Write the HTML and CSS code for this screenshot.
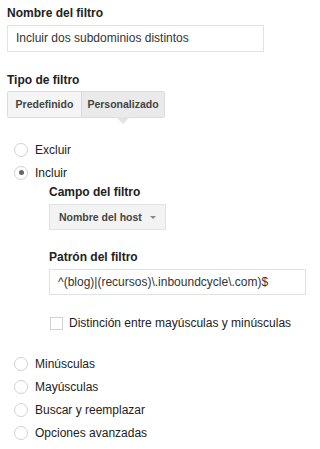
FILE: index.html
```html
<!DOCTYPE html>
<html lang="es">
<head>
  <meta charset="UTF-8">
  <title>Filtro</title>
  <link rel="stylesheet" href="styles.css">
</head>
<body>
  <div class="form">
    <div class="label">Nombre del filtro</div>
    <div class="textbox name-box">Incluir dos subdominios distintos</div>

    <div class="label type-label">Tipo de filtro</div>
    <div class="tabs">
      <div class="tab">Predefinido</div>
      <div class="tab active">Personalizado</div>
    </div>

    <div class="options">
      <div class="option"><span class="radio"></span>Excluir</div>
      <div class="option"><span class="radio checked"></span>Incluir</div>
      <div class="sub">
        <div class="label">Campo del filtro</div>
        <div class="select">Nombre del host <span class="caret"></span></div>
        <div class="label pattern-label">Patrón del filtro</div>
        <div class="textbox pattern-box">^(blog)|(recursos)\.inboundcycle\.com)$</div>
        <div class="check-row"><span class="checkbox"></span>Distinción entre mayúsculas y minúsculas</div>
      </div>
      <div class="option lower"><span class="radio"></span>Minúsculas</div>
      <div class="option"><span class="radio"></span>Mayúsculas</div>
      <div class="option"><span class="radio"></span>Buscar y reemplazar</div>
      <div class="option"><span class="radio"></span>Opciones avanzadas</div>
    </div>
  </div>
</body>
</html>
```

FILE: styles.css
```css
body {
  margin: 0;
  background: #fff;
  font-family: 'Liberation Sans', Arial, sans-serif;
  font-size: 12px;
  color: #222;
}
.form { padding: 5px 7px 0; }
.label {
  font-weight: bold;
  line-height: 16px;
  margin-bottom: 4px;
}
.textbox {
  box-sizing: border-box;
  height: 27px;
  line-height: 25px;
  border: 1px solid #e2e2e2;
  padding: 0 8px;
  color: #333;
}
.name-box { width: 257px; }
.type-label { margin-top: 20px; margin-bottom: 3px; }
.tabs {
  display: inline-flex;
  height: 27px;
  box-sizing: border-box;
  border: 1px solid #dcdcdc;
  border-radius: 2px;
}
.tab {
  box-sizing: border-box;
  width: 73px;
  text-align: center;
  line-height: 25px;
  font-size: 10.5px;
  font-weight: bold;
  color: #444;
  background: #f5f5f5;
}
.tab.active {
  width: 83px;
  background: #eaeaea;
  border-left: 1px solid #d8d8d8;
  position: relative;
}
.tab.active::after {
  content: "";
  position: absolute;
  left: 50%;
  bottom: -7px;
  margin-left: -7px;
  border-left: 7px solid transparent;
  border-right: 7px solid transparent;
  border-top: 7px solid #e3e3e3;
}
.options { margin-top: 20px; padding-left: 7px; }
.option {
  display: flex;
  align-items: center;
  height: 23px;
}
.radio {
  box-sizing: border-box;
  width: 14px;
  height: 14px;
  border: 1px solid #d2d2d2;
  border-radius: 50%;
  margin-right: 7px;
  position: relative;
  background: #fff;
}
.radio.checked::after {
  content: "";
  position: absolute;
  left: 3.5px;
  top: 3.5px;
  width: 5px;
  height: 5px;
  border-radius: 50%;
  background: #666;
}
.sub { padding-left: 35px; }
.select {
  display: inline-flex;
  align-items: center;
  box-sizing: border-box;
  width: 117px;
  height: 26px;
  padding: 0 9px;
  border: 1px solid #e2e2e2;
  background: #f3f3f3;
  font-size: 10.5px;
  font-weight: bold;
  color: #444;
}
.caret {
  margin-left: auto;
  border-left: 3px solid transparent;
  border-right: 3px solid transparent;
  border-top: 3px solid #888;
}
.pattern-label { margin-top: 19px; }
.pattern-box { width: 257px; height: 26px; line-height: 24px; }
.check-row {
  display: flex;
  align-items: center;
  margin-top: 20px;
  height: 16px;
}
.checkbox {
  box-sizing: border-box;
  width: 13px;
  height: 13px;
  border: 1px solid #d2d2d2;
  margin: 0 6px 0 1px;
}
.lower { margin-top: 21px; }
```
